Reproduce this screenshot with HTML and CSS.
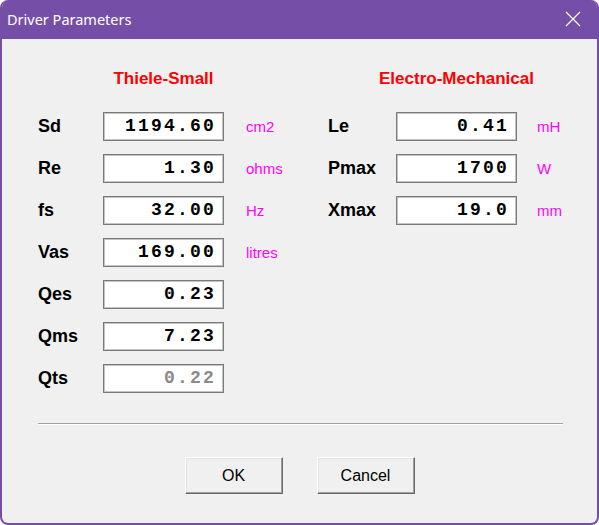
FILE: index.html
```html
<!DOCTYPE html>
<html lang="en">
<head>
  <meta charset="UTF-8" />
  <title>Driver Parameters</title>
  <link rel="stylesheet" href="styles.css">
</head>
<body>
  <div class="window">
    <div class="titlebar">
      <span class="title">Driver Parameters</span>
      <svg class="close" width="16" height="16" viewBox="0 0 16 16">
        <path d="M1 1 L15 15 M15 1 L1 15" stroke="#fff" stroke-width="1.2" fill="none" />
      </svg>
    </div>

    <div class="client">
      <div class="panels">
        <!-- Thiele-Small -->
        <div class="panel panel-left">
          <div class="heading"><span>Thiele-Small</span></div>

          <label class="lbl">Sd</label>
          <div class="field">1194.60</div>
          <span class="unit">cm2</span>

          <label class="lbl">Re</label>
          <div class="field">1.30</div>
          <span class="unit">ohms</span>

          <label class="lbl">fs</label>
          <div class="field">32.00</div>
          <span class="unit">Hz</span>

          <label class="lbl">Vas</label>
          <div class="field">169.00</div>
          <span class="unit">litres</span>

          <label class="lbl">Qes</label>
          <div class="field">0.23</div>
          <span class="unit"></span>

          <label class="lbl">Qms</label>
          <div class="field">7.23</div>
          <span class="unit"></span>

          <label class="lbl">Qts</label>
          <div class="field disabled">0.22</div>
          <span class="unit"></span>
        </div>

        <!-- Electro-Mechanical -->
        <div class="panel panel-right">
          <div class="heading"><span>Electro-Mechanical</span></div>

          <label class="lbl">Le</label>
          <div class="field">0.41</div>
          <span class="unit">mH</span>

          <label class="lbl">Pmax</label>
          <div class="field">1700</div>
          <span class="unit">W</span>

          <label class="lbl">Xmax</label>
          <div class="field">19.0</div>
          <span class="unit">mm</span>
        </div>
      </div>

      <div class="separator"></div>

      <div class="buttons">
        <button class="btn">OK</button>
        <button class="btn">Cancel</button>
      </div>
    </div>
  </div>
</body>
</html>
```

FILE: styles.css
```css
html, body {
  margin: 0;
  padding: 0;
  width: 599px;
  height: 525px;
  background: #ffffff;
  overflow: hidden;
}

/* === Window frame === */
.window {
  box-sizing: border-box;
  height: 525px;
  border: 2px solid #754fa7;
  border-top-width: 0;
  border-radius: 8px;
  background: #f0f0f0;
  overflow: hidden;
  display: flex;
  flex-direction: column;
}

.titlebar {
  height: 39px;
  flex-shrink: 0;
  background: #754fa7;
  display: flex;
  align-items: center;
  justify-content: space-between;
  padding: 0 16px 0 5px;
  color: #fff;
}

.title {
  font-family: "Noto Sans", sans-serif;
  font-size: 14.5px;
  padding-bottom: 1px;
}

.close {
  display: block;
  margin-top: -1px;
}

/* === Client area === */
.client {
  flex: 1;
  padding-top: 30px;
  font-family: "Liberation Sans", Arial, sans-serif;
}

.panels {
  display: flex;
  padding-left: 36px;
}

.panel {
  display: grid;
  grid-template-rows: 30px;
  grid-auto-rows: 29px;
  row-gap: 13px;
  align-items: center;
}

.panel-left {
  width: 290px;
  grid-template-columns: 65px 121px auto;
}

.panel-right {
  grid-template-columns: 68px 121px auto;
}

.heading {
  grid-column: 2;
  height: 20px;
  display: flex;
  justify-content: center;
  align-self: start;
  color: #ff0000;
  font-size: 17px;
  font-weight: 700;
  line-height: 20px;
  white-space: nowrap;
}

.lbl {
  grid-column: 1;
  font-size: 18px;
  font-weight: 700;
  color: #000;
}

.field {
  grid-column: 2;
  box-sizing: border-box;
  height: 29px;
  background: #fff;
  border: 1px solid #7a7a7a;
  box-shadow: inset 0 0 0 1px #c4c4c4;
  text-align: right;
  padding-right: 7px;
  font-family: "Liberation Mono", monospace;
  font-size: 18px;
  font-weight: 700;
  letter-spacing: 2.2px;
  line-height: 27px;
  color: #000;
}

/* read-only result: same box, greyed value */
.field.disabled {
  color: #8a8a8a;
}

.unit {
  grid-column: 3;
  padding-left: 22px;
  font-size: 15px;
  color: #ff00ff;
}

.panel-right .unit {
  padding-left: 20px;
}

/* === Bottom part === */
.separator {
  margin: 30px 34px 0 36px;
  border-top: 1px solid #a0a0a0;
  border-bottom: 1px solid #fff;
}

.buttons {
  display: flex;
  justify-content: center;
  gap: 34px;
  margin-top: 32px;
}

.btn {
  box-sizing: border-box;
  width: 98px;
  height: 37px;
  background: #f0f0f0;
  border: 1px solid;
  border-color: #ffffff #696969 #696969 #ffffff;
  box-shadow: inset -1px -1px 0 #a0a0a0, inset 1px 1px 0 #e3e3e3;
  font-family: "Liberation Sans", Arial, sans-serif;
  font-size: 16px;
  color: #000;
  padding: 0;
}
```
